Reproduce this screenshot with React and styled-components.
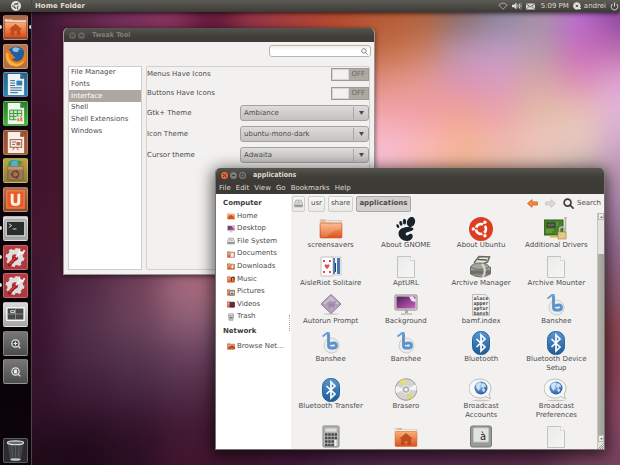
import React from "react";
import styled, { createGlobalStyle, css } from "styled-components";

const GlobalStyle = createGlobalStyle`
  * { box-sizing: border-box; }
  html, body, #root { height: 100%; }
  body {
    margin: 0;
    overflow: hidden;
    font: 7px/9px "DejaVu Sans", "Liberation Sans", sans-serif;
    color: #4c4c4c;
    background: #2c0c20;
  }
  button, input, select { font: inherit; color: inherit; margin: 0; }
  button { padding: 0; border: 0; background: none; }
  ul { margin: 0; padding: 0; list-style: none; }
  svg { display: block; }
`;

/* ---------- desktop ---------- */

const Desktop = styled.div`
  position: relative;
  height: 100vh;
  display: grid;
  grid-template: 12px 1fr / 32px 1fr;
  isolation: isolate;
`;

const Backdrop = styled.svg`
  position: absolute;
  inset: 0;
  width: 100%;
  height: 100%;
  z-index: -1;
`;

/* Colour patches of the wallpaper: [x, y, width, height, colours from left to right] */
const patches = [
  [10, 40, 60, 60, "#451732 #54203f"],
  [10, 100, 60, 100, "#41142b #541d36"],
  [10, 200, 60, 60, "#43162d #4b1f39"],
  [10, 260, 50, 40, "#3c1530 #512844 #6f3f5a #a86b7d #a86b7d"],
  [10, 300, 50, 35, "#3a1430 #54304a #6c435b #906076 #906076"],
  [10, 335, 50, 35, "#38132d #4d2b44 #573650 #6b4360 #6b4360"],
  [10, 370, 50, 35, "#34142c #3f2038 #482842 #543049 #502642"],
  [10, 405, 50, 30, "#2c1026 #2e1128 #35152e #441b37 #431835"],
  [10, 435, 50, 90, "#200b19 #200a19 #2b0f23 #41162f #40152f"],
  [260, 435, 60, 90, "#41183a #4a2344 #50284a #542a4a #5a2c4c #78425f #78425f"],
  [10, -40, 45, 80, "#35142b #5a2245 #75305a #8d3663 #65193a #9e3a48 #b24538"],
  [320, -40, 40, 75, "#b44b30 #b35a33 #b2623c #8a6b68 #8b86a1 #a891a6 #b96bce #8d499f"],
  [320, 35, 40, 30, "#b84e32 #c26b43 #ca7b5b #ba98b3 #c39bc7 #b69bac #c96dba #bd6cae"],
  [320, 65, 40, 30, "#d08070 #e09080 #e59a93 #db94b8 #d89cc0 #d7a8a4 #dc8cb8 #dda4d2"],
  [320, 95, 40, 30, "#f0a0a0 #f0a4a8 #f09ca4 #f0a095 #e8a1ab #e4bba8 #e6c0b5 #e3b5dc"],
  [320, 125, 40, 30, "#f6b8cc #f9bace #fab8bb #f6b498 #f1b8ad #eec6bc #e8ccc0 #d0a9cd"],
  [320, 155, 40, 40, "#f8c0d8 #f8c0d8 #f4b8b0 #eeb692 #e4b8a8 #e0bcb4 #c4b2aa #b890b4"],
  [580, 195, 80, 35, "#a981a9"],
  [580, 230, 80, 40, "#91698c"],
  [580, 270, 80, 40, "#8d5870"],
  [580, 310, 80, 40, "#8d4552"],
  [580, 350, 80, 40, "#8a4055"],
  [580, 390, 80, 45, "#8a4762"],
];

function Wallpaper() {
  return (
    <Backdrop viewBox="0 0 620 465" preserveAspectRatio="none" aria-hidden="true">
      <filter id="soft" x="-20%" y="-20%" width="140%" height="140%" colorInterpolationFilters="sRGB">
        <feGaussianBlur stdDeviation="15" />
      </filter>
      <g filter="url(#soft)">
        <rect x="-60" y="-60" width="760" height="585" fill="#451730" />
        {patches.map(([x, y, w, h, colors]) =>
          colors.split(" ").map((fill, i, all) => (
            <rect
              key={`${y}-${x}-${i}`}
              x={x + i * w}
              y={y}
              width={x + (i + 1) * w >= 600 && i === all.length - 1 ? w + 60 : w}
              height={h}
              fill={fill}
            />
          ))
        )}
      </g>
    </Backdrop>
  );
}

/* ---------- top panel ---------- */

const Panel = styled.header`
  grid-column: 1 / -1;
  display: flex;
  align-items: center;
  color: #dfdbd2;
  background: linear-gradient(#5c5b55, #3c3b37);
  box-shadow: 0 1px 5px rgba(0, 0, 0, 0.8);
  z-index: 1;
`;

const DashButton = styled.button`
  width: 32px;
  height: 12px;
  display: grid;
  place-items: center;
  border-right: 1px solid #45443f;
`;

const PanelTitle = styled.strong`
  flex: 1;
  padding-left: 3px;
`;

const Indicators = styled.div`
  display: flex;
  align-items: center;
  gap: 4px;
  padding-right: 1px;
`;

const Indicator = styled.button`
  display: flex;
  align-items: center;
  gap: 3px;
  margin-left: ${(p) => (p.$spaced ? "2px" : "0")};
`;

/* ---------- launcher ---------- */

const Launcher = styled.nav`
  display: flex;
  flex-direction: column;
  justify-content: space-between;
  padding: 3px 0 2px;
  background: linear-gradient(#140510, #090206 70%, #0c040b);
  border-right: 1px solid #54404f;
`;

const LauncherList = styled.ul`
  display: grid;
  grid-auto-rows: 1fr;
  height: ${(p) => (p.$single ? "25px" : "373px")};
`;

const LauncherItem = styled.li`
  position: relative;
  padding-left: 3px;
`;

const tileColors = {
  orange: "#b5704d, #91492b",
  tan: "#b57a4f, #b06f43",
  blue: "#2d5f83, #2f83b4",
  green: "#277d28, #44b735",
  rust: "#98512f, #a75936",
  olive: "#b4a745, #8c8130",
  red: "#b33b42, #a83a40",
  silver: "#d8d8d8, #a5a5a5",
  grey: "#777777, #4c4c4c",
  dark: "#282829, #2c2c2d",
};

const Tile = styled.button`
  display: grid;
  place-items: center;
  width: 25px;
  height: 25px;
  border-radius: 2px;
  border: 1px solid rgba(255, 255, 255, 0.24);
  background: linear-gradient(${(p) => tileColors[p.$tone]});
`;

const Pip = styled.i`
  position: absolute;
  top: 10px;
  ${(p) => (p.$right ? "right: 0;" : "left: 0;")}
  width: 2px;
  height: 4px;
  background: #dcdcdc;
  border-radius: ${(p) => (p.$right ? "2px 0 0 2px" : "0 2px 2px 0")};
`;

/* ---------- windows ---------- */

const Window = styled.section`
  position: absolute;
  display: flex;
  flex-direction: column;
  border-radius: 5px 5px 0 0;
  background: #f2f1f0;
  overflow: hidden;
  ${(p) =>
    p.$front
      ? css`
          inset: 168px 15px 15px 215px;
          border: 1px solid #777570;
          border-top: 0;
          box-shadow: 0 3px 16px 2px rgba(0, 0, 0, 0.65);
        `
      : css`
          inset: 28px 245px 190px 63px;
          border: 1px solid #9b9792;
          border-top: 0;
          box-shadow: 0 1px 5px rgba(0, 0, 0, 0.55);
        `}
`;

const TitleBar = styled.header`
  display: flex;
  align-items: center;
  flex: none;
  height: 14px;
  padding: 0 5px;
  gap: 2px;
  font-family: "DejaVu Sans Condensed", "DejaVu Sans", sans-serif;
  font-weight: bold;
  color: ${(p) => (p.$active ? "#dfdbd2" : "#807d78")};
  background: linear-gradient(#55544e, #403f3a 60%, #3c3b37);
`;

const WindowTitle = styled.span`
  padding-left: 5px;
`;

const ControlButton = styled.button`
  display: grid;
  place-items: center;
  width: 7px;
  height: 7px;
  border-radius: 50%;
  color: #3a3935;
  background: ${(p) => (p.$hot ? "#ee6335" : p.$active ? "#7d7b74" : "#63615b")};
`;

const controlMarks = {
  Close: "M2 2l3 3M5 2l-3 3",
  Minimize: "M2 3.5h3",
  Maximize: "M2 2h3v3h-3z",
};

function Control({ name, hot, active }) {
  return (
    <ControlButton aria-label={name} $hot={hot} $active={active}>
      <svg width="7" height="7" viewBox="0 0 7 7" fill="none" stroke="currentColor">
        <path d={controlMarks[name]} />
      </svg>
    </ControlButton>
  );
}

/* ---------- tweak tool ---------- */

const SearchRow = styled.div`
  display: flex;
  justify-content: flex-end;
  flex: none;
  padding: 3px 3px 0;
  height: 24px;
`;

const SearchBox = styled.label`
  display: flex;
  align-items: center;
  width: 102px;
  height: 12px;
  padding: 0 2px;
  border: 1px solid #b9b5b0;
  border-radius: 3px;
  background: linear-gradient(#ececeb, #fff 4px);
`;

const SearchInput = styled.input`
  flex: 1;
  min-width: 0;
  height: 10px;
  padding: 0 2px;
  border: 0;
  outline: 0;
  background: none;
`;

const TweakBody = styled.div`
  flex: 1;
  min-height: 0;
  display: grid;
  grid-template-columns: 74px 1fr;
  gap: 4px;
  padding: 0 4px 4px;
`;

const SectionBox = styled.div`
  background: #fff;
  border: 1px solid #cfcdca;
`;

const SectionList = styled.ul`
  display: grid;
  grid-auto-rows: 1fr;
  height: 70px;
`;

const SectionItem = styled.li`
  display: grid;
`;

const SectionButton = styled.button`
  padding-left: 2px;
  text-align: left;
  color: ${(p) => (p.$selected ? "#fff" : "inherit")};
  background: ${(p) => (p.$selected ? "#aea79f" : "none")};
`;

const Settings = styled.form`
  display: flex;
  flex-direction: column;
  gap: 5px;
  border: 1px solid #d3d1ce;
  border-radius: 2px;
`;

const SettingRow = styled.label`
  display: flex;
  align-items: center;
  justify-content: space-between;
  height: ${(p) => (p.$tall ? "16px" : "14px")};
`;

const Switch = styled.span`
  display: flex;
  align-items: center;
  width: 38px;
  height: 13px;
  padding-right: 3px;
  color: #6c6862;
  background: #aea9a2;
  border: 1px solid #9e9993;
`;

const SwitchKnob = styled.input`
  appearance: none;
  width: 17px;
  height: 11px;
  border: 1px solid #d8d5d2;
  background: #f2f1f0;
`;

const SwitchText = styled.span`
  flex: 1;
  text-align: right;
`;

const SelectWrap = styled.span`
  display: grid;
  grid-template-columns: 1fr 14px;
  align-items: center;
  width: 129px;
  height: 16px;
  border: 1px solid #a5a29e;
  border-radius: 3px;
  background: linear-gradient(#dddcdb, #c3c2c0);
`;

const Select = styled.select`
  appearance: none;
  min-width: 0;
  height: 12px;
  padding: 0 3px;
  border: 0;
  border-right: 1px solid #aaa8a5;
  outline: 0;
  background: none;
`;

const ArrowCell = styled.span`
  display: grid;
  place-items: center;
`;

const sections = ["File Manager", "Fonts", "Interface", "Shell", "Shell Extensions", "Windows"];
const switches = ["Menus Have Icons", "Buttons Have Icons"];
const choices = [
  ["Gtk+ Theme", "Ambiance"],
  ["Icon Theme", "ubuntu-mono-dark"],
  ["Cursor theme", "Adwaita"],
];

function Magnifier({ size, color, width }) {
  return (
    <svg width={size} height={size} viewBox="0 0 12 12" fill="none" stroke={color} strokeWidth={width}>
      <circle cx="5" cy="5" r="3.8" />
      <path d="M7.8 7.8l3.2 3.2" strokeLinecap="round" />
    </svg>
  );
}

function TweakTool() {
  return (
    <Window aria-label="Tweak Tool">
      <TitleBar>
        <Control name="Close" />
        <Control name="Minimize" />
        <WindowTitle>Tweak Tool</WindowTitle>
      </TitleBar>
      <SearchRow>
        <SearchBox>
          <SearchInput type="text" aria-label="Search tweaks" />
          <Magnifier size={7} color="#777" width="1.5" />
        </SearchBox>
      </SearchRow>
      <TweakBody>
        <SectionBox>
          <SectionList>
            {sections.map((name) => (
              <SectionItem key={name}>
                <SectionButton $selected={name === "Interface"}>{name}</SectionButton>
              </SectionItem>
            ))}
          </SectionList>
        </SectionBox>
        <Settings>
          {switches.map((name) => (
            <SettingRow key={name}>
              {name}
              <Switch>
                <SwitchKnob type="checkbox" role="switch" aria-label={name} />
                <SwitchText>OFF</SwitchText>
              </Switch>
            </SettingRow>
          ))}
          {choices.map(([name, value]) => (
            <SettingRow key={name} $tall>
              {name}
              <SelectWrap>
                <Select aria-label={name} defaultValue={value}>
                  <option>{value}</option>
                </Select>
                <ArrowCell>
                  <svg width="5" height="4" viewBox="0 0 5 4">
                    <path d="M0 0h5L2.5 4z" fill="#4c4c4c" />
                  </svg>
                </ArrowCell>
              </SelectWrap>
            </SettingRow>
          ))}
        </Settings>
      </TweakBody>
    </Window>
  );
}

/* ---------- file manager ---------- */

const MenuBar = styled.nav`
  display: flex;
  align-items: center;
  flex: none;
  gap: 5px;
  height: 12px;
  padding: 0 3px;
  color: #dfdbd2;
  background: #3c3b37;
`;

const FileBody = styled.div`
  flex: 1;
  min-height: 0;
  display: grid;
  grid-template-columns: 75px 1fr;
`;

const Sidebar = styled.aside`
  position: relative;
  padding: 4px 0 0 7px;
  background: #fff;
`;

const SidebarHeading = styled.h2`
  margin: 0;
  font: inherit;
  font-weight: bold;
  line-height: 10px;
  color: #3c3c3c;
`;

const PlaceList = styled.ul`
  display: grid;
  grid-auto-rows: 1fr;
  height: ${(p) => (p.$short ? "16px" : "113px")};
  margin-top: 2px;
  margin-bottom: 3px;
`;

const Place = styled.li`
  display: grid;
`;

const PlaceButton = styled.button`
  display: flex;
  align-items: center;
  gap: 2px;
  padding-left: 4px;
  white-space: nowrap;
`;

const PaneGrip = styled.i`
  position: absolute;
  right: 1px;
  top: 121px;
  height: 16px;
  border-left: 1px dotted #a5a3a0;
`;

const Main = styled.div`
  min-width: 0;
  min-height: 0;
  display: flex;
  flex-direction: column;
`;

const Toolbar = styled.div`
  display: flex;
  align-items: center;
  flex: none;
  gap: 3px;
  height: 19px;
  padding: 0 3px 0 1px;
`;

const Crumb = styled.button`
  display: grid;
  place-items: center;
  height: 16px;
  padding: 0 ${(p) => (p.$icon ? "1px" : "2px")};
  border: 1px solid ${(p) => (p.$current ? "#aaa7a3" : "#d0ceca")};
  border-radius: 2px;
  font-weight: ${(p) => (p.$current ? "bold" : "normal")};
  background: ${(p) => (p.$current ? "#d2d0ce" : "linear-gradient(#f8f8f7, #e9e8e7)")};
`;

const Tools = styled.div`
  flex: 1;
  display: flex;
  align-items: center;
  justify-content: flex-end;
  gap: 7px;
`;

const ToolButton = styled.button`
  display: flex;
  align-items: center;
  gap: 3px;
`;

const Content = styled.div`
  flex: 1;
  min-height: 0;
  display: grid;
  grid-template-columns: 1fr 7px;
`;

const FileGrid = styled.ul`
  display: grid;
  grid-template-columns: repeat(4, 1fr);
  grid-auto-rows: max-content;
  align-content: start;
  row-gap: 5px;
  min-height: 0;
  overflow: hidden;
  padding: 4px 3px 0 2px;
`;

const FileItem = styled.li`
  display: grid;
  justify-items: center;
`;

const FileButton = styled.button`
  display: grid;
  justify-items: center;
  align-content: start;
  max-width: 68px;
  text-align: center;
`;

const ScrollBar = styled.div`
  display: flex;
  flex-direction: column;
  background: #e4e2e0;
  border-left: 1px solid #c8c5c1;
`;

const ScrollButton = styled.button`
  display: grid;
  place-items: center;
  height: 7px;
  border: 1px solid #bcb9b5;
  background: #eeedec;
`;

const Trough = styled.div`
  flex: 1;
  display: flex;
  flex-direction: column;
  justify-content: flex-end;
`;

const Thumb = styled.div`
  height: 84%;
  background: linear-gradient(90deg, #b1ada7, #a29e98);
`;

/* ---------- icon drawings ---------- */

const HiddenDefs = styled.svg`
  position: absolute;
  width: 0;
  height: 0;
`;

const Gradients = () => (
  <HiddenDefs aria-hidden="true">
    <defs>
      <linearGradient id="gFolder" x2="0" y2="1"><stop stopColor="#f9b079" /><stop offset="1" stopColor="#dd4f1a" /></linearGradient>
      <linearGradient id="gBlue" x2="0" y2="1"><stop stopColor="#5a97d2" /><stop offset="1" stopColor="#1d5b94" /></linearGradient>
      <linearGradient id="gPaper" x2="1" y2="1"><stop stopColor="#e9ebe9" /><stop offset="1" stopColor="#f6f6f5" /></linearGradient>
      <linearGradient id="gPurple" x2="1" y2="1"><stop stopColor="#571a5c" /><stop offset="1" stopColor="#c565c0" /></linearGradient>
      <linearGradient id="gMetal" x2="0" y2="1"><stop stopColor="#c9cac3" /><stop offset=".5" stopColor="#65675f" /><stop offset="1" stopColor="#a5a69a" /></linearGradient>
      <radialGradient id="gGlobe" cx=".4" cy=".35" r=".7"><stop stopColor="#a9d0f2" /><stop offset=".5" stopColor="#4c8acb" /><stop offset="1" stopColor="#2b559a" /></radialGradient>
    </defs>
  </HiddenDefs>
);

const Globe = () => (
  <>
    <circle cx="12" cy="10" r="6.5" fill="url(#gGlobe)" />
    <path d="M7.500 6l3.500-2 1.500 2-2.500 2 1.500 2-2 3-2.500-4zM13 5l3 1 1.500 3.500-2-1-1 2 2 1-1.500 3-2-2 1-3-2-1z" fill="#eaf2f9" opacity=".8" />
  </>
);

const Ring = ({ color }) => (
  <g fill="none" stroke={color}>
    <circle cx="12" cy="12" r="5" strokeWidth="2.6" strokeDasharray="8.5 1.97" strokeDashoffset="4.2" />
    <g fill={color} stroke="none">
      <circle cx="4.3" cy="12" r="1.7" /><circle cx="15.9" cy="5.3" r="1.7" /><circle cx="15.9" cy="18.7" r="1.7" />
    </g>
  </g>
);

const art = {
  folder: (
    <>
      <path d="M1 5V3.500q0-1 1-1h5l1 1h14.500v4z" fill="#e9e7e4" stroke="#c9aa96" strokeWidth=".5" />
      <path d="M1.500 4h5" stroke="#e88a50" />
      <rect x="1" y="6" width="22" height="15" rx="1" fill="url(#gFolder)" stroke="#cc622f" strokeWidth=".6" />
      <path d="M2 7h20v5q-9 1-14 8H2z" fill="#fff" opacity=".18" />
    </>
  ),
  home: (
    <>
      <path d="M1 6V3.500h7l1 1h14V7z" fill="#f1efec" stroke="#d1b49f" strokeWidth=".5" />
      <path d="M3 4h5" stroke="#e88a50" />
      <rect x="1" y="6.500" width="22" height="15" rx="1" fill="url(#gFolder)" stroke="#d2662f" strokeWidth=".5" />
      <path d="M12 8l7 6h-2v6h-3.500v-4h-3v4H7v-6H5z" fill="#b8431a" opacity=".85" />
    </>
  ),
  gnome: (
    <g fill="#17222a">
      <ellipse cx="17" cy="5" rx="4" ry="5.200" transform="rotate(18 17 5)" />
      <ellipse cx="10.500" cy="4.600" rx="1.700" ry="2.800" /><ellipse cx="6.800" cy="6.300" rx="1.500" ry="2.400" transform="rotate(-15 7 6)" />
      <ellipse cx="3.800" cy="9" rx="1.300" ry="2" transform="rotate(-30 4 9)" />
      <path d="M19.500 11.500C15 8.500 4.500 10 4.500 16.500c0 4.500 4.500 7.500 8.500 7.500 4 0 6.500-3.500 5.500-6-.8-1.800-3-1.300-3.800-.3-1.200 1.300-3.500.8-3-1.200.7-2 7.300-1.500 7.800-5z" />
    </g>
  ),
  ubuntu: (
    <>
      <circle cx="12" cy="12" r="12" fill="#dd3d20" />
      <Ring color="#fff" />
    </>
  ),
  drivers: (
    <>
      <path d="M20 1h3M21.500 1v20" stroke="#b3b3ae" strokeWidth="1.500" />
      <rect x="0" y="3" width="19" height="15" fill="#48812a" stroke="#2b5b16" />
      <rect x="3" y="6" width="8" height="4" fill="#5d655c" stroke="#293928" />
      <path d="M2 13h8M2 15h6M13 5v4" stroke="#85aa4b" /><path d="M6 19.500h8" stroke="#d7b73c" strokeWidth="2" />
      <path d="M15.500 15v-2.500q0-2.500 2.500-2.500t2.500 2.500V15" fill="none" stroke="#babab5" strokeWidth="1.500" />
      <rect x="14" y="15" width="8" height="7" fill="#e6c68a" stroke="#a77c40" strokeWidth=".6" />
    </>
  ),
  cards: (
    <>
      <rect x="12" y="2" width="10" height="18" fill="#f5f5f5" stroke="#aaa" strokeWidth=".5" />
      <path d="M14 3h2v16h-2zM18 3h3v16h-3z" fill="#4a77b4" />
      <rect x="2" y="2" width="12" height="19" rx="1" fill="#fff" stroke="#aaa" strokeWidth=".7" />
      <path d="M5.500 10q1.200-1.700 2.500 0 1.300-1.700 2.500 0 0 2.500-2.500 4-2.500-1.500-2.500-4zM4 5h2v2H4zM10 5h2v2h-2zM4 16h2v2H4zM10 16h2v2h-2z" fill="#e34b45" />
      <path d="M16 8h1v9h-1z" fill="#233f66" />
    </>
  ),
  paper: (
    <>
      <path d="M3.500 1.500h13l4 4v17h-17z" fill="url(#gPaper)" stroke="#c2c4c1" />
      <path d="M16.500 1.500v4h4" fill="#fff" stroke="#c2c4c1" strokeWidth=".6" />
    </>
  ),
  archive: (
    <>
      <path d="M5 8l5-6.500 10.500.5-2 5-5 2" fill="#e8e8e6" stroke="#656660" strokeWidth="1.500" />
      <path d="M9 4.500l9 .5" stroke="#5d5e5a" strokeWidth="1.300" />
      <ellipse cx="11" cy="12" rx="9" ry="4" fill="#a4a69d" stroke="#6c6e68" />
      <path d="M1.500 12q8 5 20 0v7q-10 6-20 0z" fill="url(#gMetal)" stroke="#70726a" />
      <path d="M13 9q5 5 1 13" fill="none" stroke="#dddcd3" strokeWidth="2" />
    </>
  ),
  autorun: (
    <>
      <ellipse cx="12" cy="21" rx="8" ry="1" fill="#aaa" opacity=".4" />
      <path d="M12 1.500L22 11 12 20.500 2 11z" fill="#b6a4bd" stroke="#8f7b97" />
      <path d="M12 3L20 11H4z" fill="#d4c7d7" opacity=".7" />
      <path d="M7 11l5-4v2l5-1-2 7-2-2-4 3 1-4z" fill="#8d7599" opacity=".6" />
    </>
  ),
  monitor: (
    <>
      <rect x="1" y="2" width="22" height="15" rx="1" fill="#e5e5e3" stroke="#888884" />
      <rect x="2.500" y="3.500" width="19" height="12" fill="url(#gPurple)" />
      <path d="M11 17h3v3h-3z" fill="#aaaaa6" /><path d="M7 21h11" stroke="#c9c9c5" strokeWidth="2" />
      <path d="M15 3.500h4l2.500 3V9l-4-1z" fill="#fff" opacity=".85" />
    </>
  ),
  text: (
    <>
      <path d="M3.500 1.500h13l4 4v17h-17z" fill="#f0f0ef" stroke="#bebeba" />
      <g fontFamily="DejaVu Sans Mono, monospace" fontSize="5" fontWeight="bold" fill="#454545">
        <text x="4.500" y="7">alace</text><text x="4.500" y="12">apper</text>
        <text x="4.500" y="17">aptur</text><text x="4.500" y="21.500">bansh</text>
      </g>
    </>
  ),
  banshee: (
    <>
      <circle cx="12.500" cy="14.500" r="7.500" fill="#ececeb" stroke="#c9cccd" />
      <path d="M9.500 2.500V14.500q0 2.500 2.500 2.500h2.500q3 0 3-2.500t-3-2.500q-2.500 0-3.500 1.500" fill="none" stroke="#5b92cc" strokeWidth="2.800" />
      <path d="M3.500 5.500q1.500-1 4.500-3.500h2.500" fill="none" stroke="#6a9dd3" strokeWidth="1.800" />
    </>
  ),
  bluetooth: (
    <>
      <rect x="3.500" y=".5" width="17" height="23" rx="8" fill="url(#gBlue)" stroke="#24649d" />
      <path d="M7.500 8l8.500 8-4 4V4l4 4-8.500 8" fill="none" stroke="#fff" strokeWidth="1.700" />
    </>
  ),
  disc: (
    <>
      <circle cx="12" cy="11.500" r="10.800" fill="#d3d3d1" stroke="#9b9b98" />
      <path d="M12 11.500L6 3a10 10 0 0 1 5-2z" fill="#e8df62" /><path d="M12 11.500l7 8a10 10 0 0 1-5 2z" fill="#dbd66d" />
      <path d="M12 11.500L2 8a10 10 0 0 0 0 7zM12 11.500l10-5a10 10 0 0 1 .5 6z" fill="#f5f5f8" />
      <circle cx="12" cy="11.500" r="4" fill="#b2b1bc" stroke="#f1f1f1" /><circle cx="12" cy="11.500" r="1.500" fill="#fff" />
    </>
  ),
  broadcast: (
    <>
      <ellipse cx="12" cy="22.500" rx="9" ry=".8" fill="#aaa" opacity=".6" />
      <path d="M17 18.500l4.500 2.500-1.500-5A11 9.500 0 1 0 17 18.500z" fill="#f8f8f8" stroke="#bcbcba" />
      <Globe />
    </>
  ),
  calculator: (
    <>
      <rect x="4" y="1" width="16" height="21" rx="1" fill="#b9bbb7" stroke="#858682" />
      <rect x="6" y="3" width="12" height="4" fill="#dde0d9" stroke="#999" strokeWidth=".5" />
      <path d="M6 9.500h12M6 13h12M6 16.500h9M6 20h9" stroke="#484b49" strokeWidth="2.400" strokeDasharray="2.500 .7" />
      <path d="M16.500 15v6" stroke="#eef" strokeWidth="2" />
    </>
  ),
  key: (
    <>
      <rect x="1.500" y="1" width="21" height="21" rx="2" fill="#989b96" stroke="#777a75" />
      <rect x="4.500" y="3" width="15" height="14" rx="1" fill="#e1e3df" stroke="#c4c7c2" />
      <text x="11" y="15" fontFamily="DejaVu Sans, sans-serif" fontSize="10" fill="#222">à</text>
    </>
  ),
  /* launcher */
  firefox: (
    <>
      <circle cx="12.500" cy="11" r="9.500" fill="#245d9f" />
      <path d="M9 3q5-2 9 2-4-1-3 2-4 1-6-1z" fill="#82c5eb" />
      <path d="M3 4q-3 6 0 12 4 8 12 6 8-3 8-10 0-4-2-7 1 10-6 12-5 1-7-3 3 1 4-1-3-1-3-3-3-1-2-4Q5 7 3 4z" fill="#ed7d1b" />
      <path d="M2 8q-1 12 8 14 8 2 12-6-7 6-13 2Q4 15 5 9z" fill="#f9b432" />
    </>
  ),
  writer: (
    <>
      <path d="M4 1h13l4 5v17H4z" fill="#eef4f8" /><path d="M17 1v5h4z" fill="#2a5874" />
      <path d="M6.500 8h5M6.500 10.500h5M6.500 13h5M6.500 15.500h12M6.500 18h12M6.500 20.500h8" stroke="#275f86" />
      <rect x="13" y="8" width="6" height="5" fill="#2d81b4" />
    </>
  ),
  calc: (
    <>
      <path d="M4 1h13l4 5v17H4z" fill="#f2f7ee" /><path d="M17 1v5h4z" fill="#29752c" />
      <path d="M6 8.500h12.500v10H6zM6 12h12.500M6 15h12.500M10 8.500v10M14 8.500v10" fill="#cde9bf" stroke="#3c9740" />
      <rect x="13" y="15" width="7" height="6" fill="#eceef0" /><path d="M14 20v-3h2v3zM17 20v-4h2v4z" fill="#e27b31" />
    </>
  ),
  impress: (
    <>
      <path d="M4 1h13l4 5v17H4z" fill="#f6efea" /><path d="M17 1v5h4z" fill="#83401f" />
      <rect x="6.500" y="9" width="12" height="8" fill="#eee" stroke="#a65732" /><path d="M8.500 11.500h4M8.500 14h3M9 20l2-3M15 20l-2-3" stroke="#a65732" />
      <rect x="13" y="11.500" width="4" height="3.500" fill="#b56e4d" />
    </>
  ),
  software: (
    <>
      <path d="M4 7q0-6 6-6 2-1 4 1 5-2 6 5z" fill="#3c9c54" /><circle cx="11" cy="5" r="3.500" fill="#5ca9de" /><path d="M17 7l3-5 2 2-2 3z" fill="#e77b23" />
      <path d="M4 8h16v14H4z" fill="#9f7655" stroke="#735033" strokeWidth=".7" /><path d="M4 8h16v3H4z" fill="#c0976e" />
      <circle cx="12" cy="16" r="3.300" fill="none" stroke="#64432a" strokeWidth="1.400" /><path d="M7 16h2M14 12l-1 2M14 20.500l-1-2" stroke="#64432a" strokeWidth="1.800" />
    </>
  ),
  one: (
    <>
      <rect x="3" y="3" width="18" height="18" fill="#e95a27" stroke="#f28a5f" />
      <path d="M8.500 6v8q0 3.300 3.500 3.300t3.500-3.300V6" fill="none" stroke="#fff0e8" strokeWidth="3" />
    </>
  ),
  terminal: (
    <>
      <rect x="1" y="3" width="22" height="18" rx="1" fill="#dadbd8" stroke="#888" /><rect x="3" y="5" width="18" height="14" fill="#292e2c" />
      <path d="M5 7l3 2-3 2M9 12.500h4" fill="none" stroke="#ddd" />
    </>
  ),
  tweak: (
    <>
      <circle cx="11.500" cy="12" r="5.800" fill="none" stroke="#dededd" strokeWidth="5" />
      <circle cx="11.500" cy="12" r="8.600" fill="none" stroke="#dededd" strokeWidth="2.400" strokeDasharray="3.380 3.380" />
      <path d="M5.500 19.500l6.500-7" stroke="#98161d" strokeWidth="3.600" strokeLinecap="round" /><path d="M6 18.500l5.500-6" stroke="#de3d44" strokeWidth="1.600" strokeLinecap="round" />
      <path d="M12.500 11.500L17 6.500M16 2.500v3.500l3.500 1.500 2-3" fill="none" stroke="#f6f6f4" strokeWidth="1.900" />
    </>
  ),
  workspaces: (
    <>
      <rect x="3" y="5" width="18" height="13" fill="#484848" stroke="#f8f8f8" strokeWidth="1.500" />
      <path d="M12 6v11M4 11.500h16" stroke="#9a9a9a" strokeWidth=".8" /><path d="M7 8h4v2H7z" fill="none" stroke="#ddd" />
    </>
  ),
  apps: (
    <g fill="none" stroke="#e8e8e8" strokeWidth="1.300">
      <circle cx="12" cy="12" r="3.800" fill="#444" /><path d="M15 15l2 2M10 12h4M12 10v4" />
    </g>
  ),
  files: (
    <g fill="none" stroke="#e8e8e8" strokeWidth="1.300">
      <circle cx="12" cy="12" r="3.800" fill="#555" /><path d="M15 15l2 2" /><path d="M11 10.500h2v3h-2z" fill="#fff" />
    </g>
  ),
  bin: (
    <>
      <path d="M4 4l3 17q5 2 10 0l3-17z" fill="#4b4f4f" opacity=".6" stroke="#737777" strokeWidth=".6" />
      <path d="M8 7l1 12M12 7v12M16 7l-1 12" stroke="#6d7171" strokeWidth=".6" />
      <ellipse cx="12" cy="4" rx="8.500" ry="2" fill="#676a6a" stroke="#dfe3e2" strokeWidth="1.300" />
      <ellipse cx="12" cy="21.500" rx="5.500" ry="1.300" fill="#c4c8c7" />
    </>
  ),
  /* places */
  disk: (
    <>
      <path d="M5 3h14l4 12v6H1v-6z" fill="#e3e4e2" stroke="#81837e" strokeWidth="1.500" />
      <path d="M2 15h20v5H2z" fill="#8e918d" /><ellipse cx="12" cy="9" rx="6" ry="4" fill="#c5c8c4" />
    </>
  ),
  trash: (
    <>
      <path d="M4 5l2 17h12l2-17z" fill="#c9ccca" stroke="#7c807d" strokeWidth="1.500" /><path d="M7 11h10v6H7z" fill="#838785" />
      <ellipse cx="12" cy="4" rx="9" ry="2.500" fill="#edefee" stroke="#858986" strokeWidth="1.500" />
    </>
  ),
};

const placeMarks = {
  documents: <path d="M10 8h11v14H10z" fill="#f0ece8" stroke="#777" />,
  downloads: <path d="M14 7h5v6h4l-7 8-7-8h5z" fill="#f4f0ec" stroke="#885238" />,
  music: <path d="M13 18V8l8-2v10" fill="none" stroke="#442b22" strokeWidth="3" />,
  pictures: <><path d="M8 9h15v12H8z" fill="#e8e5e2" stroke="#555" strokeWidth="2" /><path d="M10 19l5-6 6 6z" fill="#426288" /></>,
  videos: <path d="M9 7h13v14H9z" fill="#632d52" stroke="#442438" strokeWidth="2" />,
  network: <path d="M8 20v-5h14v5M15 10v5" fill="none" stroke="#734027" strokeWidth="3" />,
};

function Icon({ name, size = 24 }) {
  return (
    <svg width={size} height={size} viewBox="0 0 24 24" aria-hidden="true">
      {art[name] || (
        <>
          <path d="M1 4h8l1 2h13v4H1z" fill="#d9c3b3" stroke="#a6785b" />
          <rect x="1" y="7" width="22" height="15" fill="url(#gFolder)" stroke="#a8593a" />
          {placeMarks[name]}
        </>
      )}
    </svg>
  );
}

/* ---------- data ---------- */

const launcherItems = [
  ["home", "orange", "Home Folder", "both"],
  ["firefox", "tan", "Firefox"],
  ["writer", "blue", "Writer"],
  ["calc", "green", "Calc"],
  ["impress", "rust", "Impress"],
  ["software", "olive", "Software Center"],
  ["one", "orange", "Ubuntu One"],
  ["terminal", "silver", "Terminal", "left"],
  ["tweak", "red", "Tweak Tool", "left"],
  ["tweak", "red", "Advanced Settings", "left"],
  ["workspaces", "silver", "Workspaces"],
  ["apps", "grey", "Applications"],
  ["files", "grey", "Files"],
];

const places = [
  ["home", "Home"],
  ["monitor", "Desktop"],
  ["disk", "File System"],
  ["documents", "Documents"],
  ["downloads", "Downloads"],
  ["music", "Music"],
  ["pictures", "Pictures"],
  ["videos", "Videos"],
  ["trash", "Trash"],
];

const files = [
  ["folder", "screensavers"],
  ["gnome", "About GNOME"],
  ["ubuntu", "About Ubuntu"],
  ["drivers", "Additional Drivers"],
  ["cards", "AisleRiot Solitaire"],
  ["paper", "AptURL"],
  ["archive", "Archive Manager"],
  ["paper", "Archive Mounter"],
  ["autorun", "Autorun Prompt"],
  ["monitor", "Background"],
  ["text", "bamf.index"],
  ["banshee", "Banshee"],
  ["banshee", "Banshee"],
  ["banshee", "Banshee"],
  ["bluetooth", "Bluetooth"],
  ["bluetooth", "Bluetooth Device Setup"],
  ["bluetooth", "Bluetooth Transfer"],
  ["disc", "Brasero"],
  ["broadcast", "Broadcast Accounts"],
  ["broadcast", "Broadcast Preferences"],
  ["calculator"],
  ["home"],
  ["key"],
  ["paper"],
];

function PlaceEntry({ icon, children }) {
  return (
    <Place>
      <PlaceButton>
        <Icon name={icon} size={8} />
        {children}
      </PlaceButton>
    </Place>
  );
}

function Arrow({ fill, stroke, flip }) {
  return (
    <svg width="11" height="9" viewBox="0 0 11 9">
      <path
        d={flip ? "M10.500 4.500L6 .7v2.300H.700v3H6v2.300z" : "M.5 4.500L5 .7v2.300h5.300v3H5v2.300z"}
        fill={fill}
        stroke={stroke}
        strokeLinejoin="round"
      />
    </svg>
  );
}

function FileManager() {
  return (
    <Window $front aria-label="applications">
      <TitleBar $active>
        <Control name="Close" hot />
        <Control name="Minimize" active />
        <Control name="Maximize" active />
        <WindowTitle>applications</WindowTitle>
      </TitleBar>
      <MenuBar>
        {["File", "Edit", "View", "Go", "Bookmarks", "Help"].map((name) => (
          <button key={name}>{name}</button>
        ))}
      </MenuBar>
      <FileBody>
        <Sidebar>
          <SidebarHeading>Computer</SidebarHeading>
          <PlaceList>
            {places.map(([icon, name]) => (
              <PlaceEntry key={name} icon={icon}>{name}</PlaceEntry>
            ))}
          </PlaceList>
          <SidebarHeading>Network</SidebarHeading>
          <PlaceList $short>
            <PlaceEntry icon="network">Browse Net…</PlaceEntry>
          </PlaceList>
          <PaneGrip />
        </Sidebar>
        <Main>
          <Toolbar>
            <Crumb $icon aria-label="File System"><Icon name="disk" size={9} /></Crumb>
            <Crumb>usr</Crumb>
            <Crumb>share</Crumb>
            <Crumb $current>applications</Crumb>
            <Tools>
              <ToolButton aria-label="Back"><Arrow fill="#f08a48" stroke="#d26a2c" /></ToolButton>
              <ToolButton aria-label="Forward"><Arrow flip fill="#dddbd8" stroke="#c9c6c3" /></ToolButton>
              <ToolButton><Magnifier size={11} color="#3c3c3c" width="1.8" />Search</ToolButton>
            </Tools>
          </Toolbar>
          <Content>
            <FileGrid>
              {files.map(([icon, name], i) => (
                <FileItem key={i}>
                  <FileButton><Icon name={icon} />{name}</FileButton>
                </FileItem>
              ))}
            </FileGrid>
            <ScrollBar>
              <ScrollButton aria-label="Scroll up">
                <svg width="3" height="2" viewBox="0 0 3 2"><path d="M0 2h3L1.500 0z" fill="#777" /></svg>
              </ScrollButton>
              <Trough><Thumb /></Trough>
              <ScrollButton aria-label="Scroll down">
                <svg width="3" height="2" viewBox="0 0 3 2"><path d="M0 0h3L1.500 2z" fill="#777" /></svg>
              </ScrollButton>
              <svg width="6" height="7" viewBox="0 0 6 7" stroke="#a29f9b">
                <path d="M0 7l6-6M2 7l4-4M4 7l2-2" />
              </svg>
            </ScrollBar>
          </Content>
        </Main>
      </FileBody>
    </Window>
  );
}

function TopPanel() {
  return (
    <Panel>
      <DashButton aria-label="Dash home">
        <svg width="10" height="10" viewBox="0 0 24 24">
          <circle cx="12" cy="12" r="12" fill="#e6e3dc" />
          <Ring color="#4b4a45" />
        </svg>
      </DashButton>
      <PanelTitle>Home Folder</PanelTitle>
      <Indicators>
        <Indicator aria-label="Network">
          <svg width="10" height="8" viewBox="0 0 10 8" fill="none" stroke="#a5a29a">
            <path d="M.8 3Q5-.8 9.200 3L5 7.300z" />
          </svg>
        </Indicator>
        <Indicator aria-label="Volume">
          <svg width="10" height="8" viewBox="0 0 10 8" fill="none" stroke="#dfdbd2">
            <path d="M0 2.800h2L4.500.5v7L2 5.200H0z" fill="#dfdbd2" stroke="none" />
            <path d="M5.700 2.500q1 1.500 0 3M7.200 1.500q1.800 2.500 0 5" /><path d="M8.600.5q2 3.500 0 7" stroke="#8b8880" />
          </svg>
        </Indicator>
        <Indicator aria-label="Messages">
          <svg width="9" height="7" viewBox="0 0 9 7">
            <path d="M0 .5h9v6H0z" fill="#dfdbd2" /><path d="M0 .8l4.500 3L9 .8M.2 6.300l3-3M8.800 6.300l-3-3" fill="none" stroke="#4b4a45" strokeWidth=".8" />
          </svg>
        </Indicator>
        <Indicator $spaced>5:09 PM</Indicator>
        <Indicator>
          <svg width="8" height="8" viewBox="0 0 8 8">
            <path d="M4 .2a3.700 3.700 0 1 0 1.500 7H8V6H7A3.700 3.700 0 0 0 4 .2z" fill="#e6e2d9" />
            <path d="M2.700 2.700l2.400 2.400M5.100 2.700L2.700 5.100" stroke="#4b4a45" />
          </svg>
          andrei
        </Indicator>
        <Indicator aria-label="Session">
          <svg width="9" height="9" viewBox="0 0 9 9" fill="none" stroke="#dfdbd2">
            <path d="M2.500 2a3.300 3.300 0 1 0 4 0M4.500.5v4" />
          </svg>
        </Indicator>
      </Indicators>
    </Panel>
  );
}

export default function App() {
  return (
    <Desktop>
      <GlobalStyle />
      <Gradients />
      <Wallpaper />
      <TopPanel />
      <Launcher aria-label="Launcher">
        <LauncherList>
          {launcherItems.map(([icon, tone, name, pips]) => (
            <LauncherItem key={name}>
              {pips && <Pip />}
              <Tile $tone={tone} aria-label={name}><Icon name={icon} size={23} /></Tile>
              {pips === "both" && <Pip $right />}
            </LauncherItem>
          ))}
        </LauncherList>
        <LauncherList $single>
          <LauncherItem>
            <Tile $tone="dark" aria-label="Trash"><Icon name="bin" size={23} /></Tile>
          </LauncherItem>
        </LauncherList>
      </Launcher>
      <TweakTool />
      <FileManager />
    </Desktop>
  );
}
